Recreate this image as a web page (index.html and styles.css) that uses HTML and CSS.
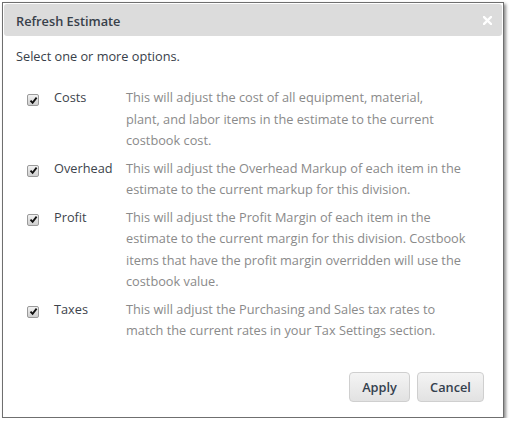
FILE: index.html
```html
<!DOCTYPE html>
<html>
<head>
<meta charset="utf-8">
<link rel="stylesheet" href="styles.css">
</head>
<body>
<div class="dialog">
  <div class="header">
    <span class="title">Refresh Estimate</span>
    <svg class="close" width="9" height="9" viewBox="0 0 9 9"><path d="M1 1L8 8M8 1L1 8" stroke="#fff" stroke-width="2.4" stroke-linecap="square"/></svg>
  </div>
  <div class="content">
    <p class="intro">Select one or more options.</p>
    <div class="options">
      <span class="check"><svg width="9" height="9" viewBox="0 0 9 9"><path d="M1.5 4.6L3.6 6.9L7.6 1.6" fill="none" stroke="#111" stroke-width="1.8"/></svg></span>
      <span class="label">Costs</span>
      <span class="desc">This will adjust the cost of all equipment, material,<br>plant, and labor items in the estimate to the current<br>costbook cost.</span>

      <span class="check"><svg width="9" height="9" viewBox="0 0 9 9"><path d="M1.5 4.6L3.6 6.9L7.6 1.6" fill="none" stroke="#111" stroke-width="1.8"/></svg></span>
      <span class="label">Overhead</span>
      <span class="desc">This will adjust the Overhead Markup of each item in the<br>estimate to the current markup for this division.</span>

      <span class="check"><svg width="9" height="9" viewBox="0 0 9 9"><path d="M1.5 4.6L3.6 6.9L7.6 1.6" fill="none" stroke="#111" stroke-width="1.8"/></svg></span>
      <span class="label">Profit</span>
      <span class="desc">This will adjust the Profit Margin of each item in the<br>estimate to the current margin for this division. Costbook<br>items that have the profit margin overridden will use the<br>costbook value.</span>

      <span class="check"><svg width="9" height="9" viewBox="0 0 9 9"><path d="M1.5 4.6L3.6 6.9L7.6 1.6" fill="none" stroke="#111" stroke-width="1.8"/></svg></span>
      <span class="label">Taxes</span>
      <span class="desc">This will adjust the Purchasing and Sales tax rates to<br>match the current rates in your Tax Settings section.</span>
    </div>
  </div>
  <div class="footer">
    <button class="btn btn-apply">Apply</button>
    <button class="btn btn-cancel">Cancel</button>
  </div>
</div>
</body>
</html>
```

FILE: styles.css
```css
html, body {
  margin: 0;
  padding: 0;
  background: #fff;
}
body {
  font-family: "Open Sans", Lato, sans-serif;
  font-size: 12.75px;
  color: #444;
}
.dialog {
  margin: 2px 0 0 2px;
  width: 498px;
  height: 412px;
  border: 1px solid #6f6f6f;
  box-shadow: 2px 2px 3px rgba(0, 0, 0, 0.45);
  padding: 1px;
  display: flex;
  flex-direction: column;
  background: #fff;
}
.header {
  height: 32px;
  background: #dcdcdc;
  border-radius: 3px;
  display: flex;
  align-items: center;
  justify-content: space-between;
  padding: 0 10px 0 12px;
}
.title {
  font-weight: 600;
  font-size: 12.75px;
  color: #38404a;
  padding-top: 1px;
}
.close {
  display: block;
  margin-top: 1px;
}
.content {
  flex: 1;
  padding: 10px 0 0 12px;
}
.intro {
  margin: 0;
  line-height: 21px;
  color: #38404a;
}
.options {
  margin-top: 20px;
  display: grid;
  grid-template-columns: 27px 72px auto;
  row-gap: 6px;
  padding-left: 11px;
  line-height: 21.5px;
}
.check {
  width: 10px;
  height: 10px;
  margin-top: 7px;
  border: 1px solid #9a9a9a;
  border-radius: 2px;
  background: linear-gradient(#f2f2f2, #cfcfcf);
  display: flex;
  align-items: center;
  justify-content: center;
}
.check svg { display: block; }
.label {
  color: #3d444c;
  white-space: nowrap;
}
.desc {
  color: #8a8a8a;
  white-space: nowrap;
}
.footer {
  display: flex;
  justify-content: flex-end;
  gap: 7px;
  padding: 0 18px 14px 0;
}
.btn {
  height: 30px;
  border: 1px solid #cfcfcf;
  border-radius: 4px;
  background: linear-gradient(#f4f4f4, #e2e2e2);
  font-family: "Open Sans", Lato, sans-serif;
  font-weight: 600;
  font-size: 12.75px;
  color: #34404e;
  padding: 0;
}
.btn-apply { width: 61px; }
.btn-cancel { width: 67px; }
```
